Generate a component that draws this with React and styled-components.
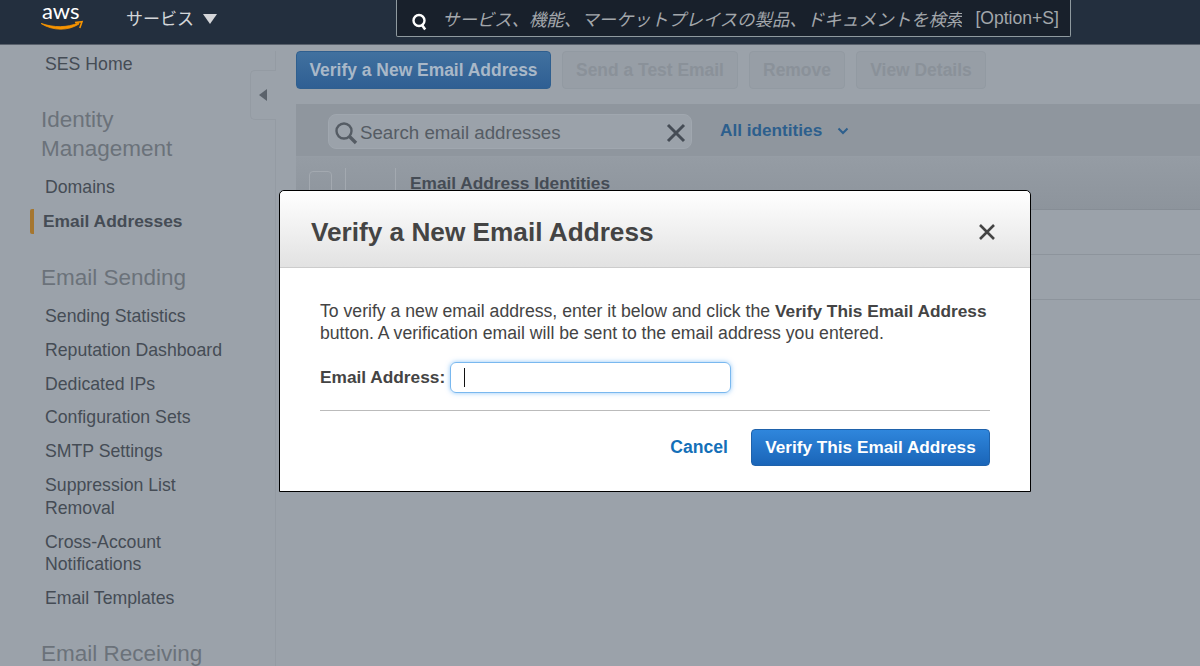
import React from "react";
import styled, { createGlobalStyle } from "styled-components";

const GlobalStyle = createGlobalStyle`
  html, body {
    margin: 0;
    padding: 0;
    height: 666px;
    overflow: hidden;
    background: #9ba2aa;
    font-family: "Liberation Sans", Arial, sans-serif;
  }
`;

const Page = styled.div`
  position: relative;
  width: 1200px;
  height: 666px;
  overflow: hidden;
  display: flex;
  flex-direction: column;
`;

const TopBar = styled.header`
  height: 44px;
  flex: none;
  display: flex;
  align-items: center;
  background: #232f3e;
  border-bottom: 1px solid #59616c;
  box-sizing: content-box;
`;

const Logo = styled.svg`
  width: 44px;
  height: 32px;
  margin-left: 40px;
  margin-top: -8px;
`;

const Services = styled.div`
  margin-left: 42px;
  margin-top: -9px;
  width: 91px;
  flex: none;
  display: flex;
  align-items: center;
  gap: 9px;
  color: #d4d6d9;
  font: 17px "Noto Sans CJK JP", sans-serif;
  white-space: nowrap;
`;

const Caret = styled.span`
  margin-top: 2px;
  width: 0;
  height: 0;
  border-left: 7px solid transparent;
  border-right: 7px solid transparent;
  border-top: 10px solid #d4d6d9;
`;

const TopSearch = styled.div`
  margin-left: 179px;
  margin-top: -7px;
  width: 675px;
  height: 37px;
  box-sizing: border-box;
  border: 1px solid #8f9a9f;
  border-top: none;
  border-radius: 0 0 2px 2px;
  background: #18202b;
  display: flex;
  align-items: center;
  padding: 0 11px 0 14px;
  color: #a3a7ab;
`;

const SearchGlyph = styled.svg`
  flex: none;
  margin-top: 8px;
`;

const Hint = styled.span`
  flex: 1;
  margin-left: 13px;
  font: italic 17.4px "Noto Sans CJK JP", sans-serif;
  white-space: nowrap;
  overflow: hidden;
`;

const Shortcut = styled.span`
  margin: 1px 0 0 13px;
  font: 17.6px "Liberation Sans", sans-serif;
  white-space: nowrap;
`;

const Body = styled.div`
  flex: 1;
  display: flex;
  min-height: 0;
`;

const Sidebar = styled.nav`
  width: 276px;
  flex: none;
  box-sizing: border-box;
  margin-top: 6px;
  padding-top: 2px;
  border-right: 1px solid #949ba3;
`;

const NavItem = styled.a`
  display: block;
  margin-left: 45px;
  width: 190px;
  font-size: 17.7px;
  line-height: 22.5px;
  color: #454c55;
  margin-bottom: ${(p) => p.$gap || 11.4}px;
`;

const ActiveItem = styled.a`
  display: block;
  margin-left: 30px;
  padding-left: 9px;
  border-left: 4px solid #a5762f;
  border-radius: 2px;
  font-weight: bold;
  font-size: 17.4px;
  line-height: 25px;
  color: #454c55;
  margin-bottom: 29px;
`;

const NavHeading = styled.div`
  margin-left: 41px;
  width: 190px;
  font-size: 22.5px;
  line-height: 29px;
  color: #6b727a;
  margin-bottom: 13px;
`;

const Collapse = styled.div`
  position: absolute;
  left: 250px;
  top: 70px;
  width: 26px;
  height: 50px;
  box-sizing: border-box;
  background: #9ba2aa;
  border: 1px solid #949ba3;
  border-right: none;
  border-radius: 5px 0 0 5px;
  display: flex;
  align-items: center;
  justify-content: center;
  padding-right: 2px;
  &::before {
    content: "";
    border-top: 6.5px solid transparent;
    border-bottom: 6.5px solid transparent;
    border-right: 8px solid #5b626b;
  }
`;

const Main = styled.main`
  flex: 1;
  padding: 6px 0 0 20px;
  display: flex;
  flex-direction: column;
`;

const Toolbar = styled.div`
  display: flex;
  gap: 11px;
  height: 38px;
  margin-bottom: 15px;
`;

const ActionButton = styled.button`
  width: ${(p) => p.$width}px;
  height: 38px;
  box-sizing: border-box;
  padding: 0;
  border-radius: 4px;
  font: bold 17.45px "Liberation Sans", sans-serif;
  border: 1px solid ${(p) => (p.$primary ? "#2f5f8f" : "#929aa2")};
  color: ${(p) => (p.$primary ? "#a9b8c8" : "#8a9199")};
  background: ${(p) =>
    p.$primary ? "linear-gradient(#41719f, #2f5f93)" : "#979ea6"};
  white-space: nowrap;
`;

const FilterBar = styled.div`
  height: 53px;
  box-sizing: border-box;
  background: #8f969e;
  border-bottom: 1px solid #969da5;
  padding: 10px 0 0 32px;
  display: flex;
  align-items: flex-start;
`;

const SearchBox = styled.div`
  width: 364px;
  height: 35px;
  box-sizing: border-box;
  border: 1px solid #a0a7af;
  border-radius: 8px;
  background: #9ba2aa;
  display: flex;
  align-items: center;
  padding: 2px 4px 0 5px;
  color: #555c64;
  font-size: 18.7px;
`;

const SearchText = styled.span`
  flex: 1;
  margin-left: 2px;
`;

const Identities = styled.div`
  margin: 6px 0 0 28px;
  display: flex;
  align-items: center;
  gap: 15px;
  color: #2d5f8d;
  font-weight: bold;
  font-size: 17.2px;
`;

const TableHead = styled.div`
  height: 53px;
  box-sizing: border-box;
  background: linear-gradient(#959ca4, #8d949c);
  border-bottom: 1px solid #868d95;
  display: flex;
  padding-left: 13px;
`;

const Check = styled.span`
  margin-top: 14px;
  width: 23px;
  height: 30px;
  box-sizing: border-box;
  border: 1px solid #a3a9b0;
  border-radius: 4px;
`;

const Sep = styled.span`
  margin: 11px 0 0 ${(p) => p.$left}px;
  width: 1px;
  height: 30px;
  background: #a3a9b0;
`;

const HeadTitle = styled.span`
  margin: 16px 0 0 14px;
  font-weight: bold;
  font-size: 17.3px;
  color: #454c55;
`;

const TableRow = styled.div`
  height: 45px;
  box-sizing: border-box;
  border-bottom: 1px solid #8d949c;
`;

const Modal = styled.section`
  position: absolute;
  left: 279px;
  top: 190px;
  width: 752px;
  height: 302px;
  box-sizing: border-box;
  background: #fff;
  border: 1px solid #000;
  border-radius: 5px 5px 0 0;
  display: flex;
  flex-direction: column;
  color: #444;
`;

const ModalHead = styled.div`
  height: 77px;
  flex: none;
  box-sizing: border-box;
  background: linear-gradient(#fff, #e2e2e2);
  border-bottom: 1px solid #ccc;
  border-radius: 5px 5px 0 0;
  display: flex;
  align-items: center;
  justify-content: space-between;
  padding: 6px 34px 0 31px;
`;

const ModalTitle = styled.h2`
  margin: 0;
  font-size: 26.2px;
  font-weight: bold;
  color: #444;
`;

const ModalBody = styled.div`
  padding: 33px 40px 0;
  display: flex;
  flex-direction: column;
`;

const Intro = styled.p`
  margin: 0;
  font-size: 17.65px;
  line-height: 21.5px;
  b {
    font-size: 17.3px;
  }
`;

const FormRow = styled.div`
  margin-top: 18px;
  display: flex;
  align-items: center;
  gap: 5px;
  font-weight: bold;
  font-size: 17.3px;
`;

const EmailInput = styled.div`
  width: 281px;
  height: 31px;
  box-sizing: border-box;
  border: 1px solid #79b8ef;
  border-radius: 6px;
  box-shadow: 0 0 5px rgba(100, 175, 245, 0.7);
  display: flex;
  align-items: center;
  padding-left: 13px;
  &::before {
    content: "";
    width: 1px;
    height: 19px;
    background: #111;
  }
`;

const Divider = styled.hr`
  margin: 17px 0 0;
  border: none;
  border-top: 1px solid #bbb;
`;

const Footer = styled.div`
  margin-top: 18px;
  display: flex;
  justify-content: flex-end;
  align-items: center;
  gap: 23px;
`;

const CancelLink = styled.a`
  color: #1470b8;
  font-weight: bold;
  font-size: 17.6px;
`;

const ConfirmButton = styled.button`
  width: 239px;
  height: 37px;
  box-sizing: border-box;
  border: 1px solid #1f62ab;
  border-radius: 4px;
  background: linear-gradient(#2f86dc, #1a65b8);
  color: #fff;
  font: bold 17.2px "Liberation Sans", sans-serif;
`;

const Close = styled.svg`
  width: 18px;
  height: 18px;
`;

const nav = [
  "Sending Statistics",
  "Reputation Dashboard",
  "Dedicated IPs",
  "Configuration Sets",
  "SMTP Settings",
  "Suppression List Removal",
  "Cross-Account Notifications",
];

export default function App() {
  return (
    <Page>
      <GlobalStyle />
      <TopBar>
        <Logo viewBox="0 0 44 32">
          <text x="2" y="17" fill="#fff" fontSize="22" fontFamily="Lato, Liberation Sans">aws</text>
          <path d="M1 21.5c12 7.5 27 7.5 38 .5l-.5-1.2c-11 5-25 5-37 .7z" fill="#f79400" stroke="#f79400" strokeWidth="0.8" />
          <path d="M35 20.5l7-.8-2.2 6.3" fill="none" stroke="#f79400" strokeWidth="1.6" />
        </Logo>
        <Services>
          サービス <Caret />
        </Services>
        <TopSearch>
          <SearchGlyph width="18" height="18" viewBox="0 0 18 18">
            <circle cx="8" cy="7.5" r="5.5" fill="none" stroke="#fff" strokeWidth="2.4" />
            <path d="M11 12l3.2 4.5" stroke="#fff" strokeWidth="2.6" />
          </SearchGlyph>
          <Hint>サービス、機能、マーケットプレイスの製品、ドキュメントを検索</Hint>
          <Shortcut>[Option+S]</Shortcut>
        </TopSearch>
      </TopBar>
      <Body>
        <Sidebar>
          <NavItem $gap={29}>SES Home</NavItem>
          <NavHeading>Identity Management</NavHeading>
          <NavItem $gap={10.8}>Domains</NavItem>
          <ActiveItem>Email Addresses</ActiveItem>
          <NavHeading>Email Sending</NavHeading>
          {nav.map((label) => (
            <NavItem key={label}>{label}</NavItem>
          ))}
          <NavItem $gap={29}>Email Templates</NavItem>
          <NavHeading>Email Receiving</NavHeading>
        </Sidebar>
        <Main>
          <Toolbar>
            <ActionButton $primary $width={255}>Verify a New Email Address</ActionButton>
            <ActionButton $width={176}>Send a Test Email</ActionButton>
            <ActionButton $width={96}>Remove</ActionButton>
            <ActionButton $width={130}>View Details</ActionButton>
          </Toolbar>
          <FilterBar>
            <SearchBox>
              <svg width="24" height="24" viewBox="0 0 24 24">
                <circle cx="10" cy="10" r="7.5" fill="none" stroke="#555c64" strokeWidth="2.4" />
                <path d="M15.5 15.5l6.5 6.5" stroke="#555c64" strokeWidth="3.4" />
              </svg>
              <SearchText>Search email addresses</SearchText>
              <svg width="22" height="22" viewBox="0 0 22 22">
                <path d="M3 3l16 16M19 3L3 19" stroke="#454c55" strokeWidth="3" />
              </svg>
            </SearchBox>
            <Identities>
              All identities
              <svg width="12" height="8" viewBox="0 0 12 8">
                <path d="M1.5 1.5L6 6l4.5-4.5" fill="none" stroke="#2d5f8d" strokeWidth="2" />
              </svg>
            </Identities>
          </FilterBar>
          <TableHead>
            <Check />
            <Sep $left={13} />
            <Sep $left={49} />
            <HeadTitle>Email Address Identities</HeadTitle>
          </TableHead>
          <TableRow />
          <TableRow />
        </Main>
      </Body>
      <Collapse />
      <Modal>
        <ModalHead>
          <ModalTitle>Verify a New Email Address</ModalTitle>
          <Close viewBox="0 0 18 18">
            <path d="M2 2l14 14M16 2L2 16" stroke="#444" strokeWidth="2.6" />
          </Close>
        </ModalHead>
        <ModalBody>
          <Intro>
            To verify a new email address, enter it below and click the <b>Verify This Email Address</b> button. A verification email will be sent to the email address you entered.
          </Intro>
          <FormRow>
            Email Address:
            <EmailInput />
          </FormRow>
          <Divider />
          <Footer>
            <CancelLink>Cancel</CancelLink>
            <ConfirmButton>Verify This Email Address</ConfirmButton>
          </Footer>
        </ModalBody>
      </Modal>
    </Page>
  );
}
